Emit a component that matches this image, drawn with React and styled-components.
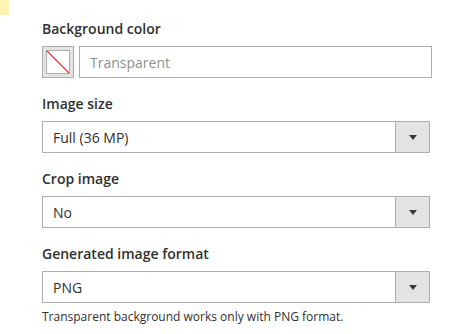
import React from "react";
import styled, { createGlobalStyle } from "styled-components";

const GlobalStyle = createGlobalStyle`
    body {
        margin: 0;
        background: #fff;
        font-family: "Open Sans", "Liberation Sans", sans-serif;
        color: #303030;
    }
`;

export default function App() {
    return (
        <Page>
            <GlobalStyle />
            <Marker />
            <Form>
                <Field>
                    <Label>Background color</Label>
                    <ColorRow>
                        <Swatch>
                            <SwatchInner>
                                <svg width="24" height="24" viewBox="0 0 24 24">
                                    <line x1="0" y1="0" x2="24" y2="24" stroke="#d0202a" strokeWidth="1.2" />
                                </svg>
                            </SwatchInner>
                        </Swatch>
                        <TextInput placeholder="Transparent" />
                    </ColorRow>
                </Field>
                <Field>
                    <Label>Image size</Label>
                    <Select value="Full (36 MP)" />
                </Field>
                <Field>
                    <Label>Crop image</Label>
                    <Select value="No" />
                </Field>
                <Field>
                    <Label>Generated image format</Label>
                    <Select value="PNG" />
                    <Note>Transparent background works only with PNG format.</Note>
                </Field>
            </Form>
        </Page>
    );
}

function Select({ value }) {
    return (
        <SelectBox>
            <SelectValue>{value}</SelectValue>
            <ArrowBtn>
                <Arrow />
            </ArrowBtn>
        </SelectBox>
    );
}

const Page = styled.div`
    position: relative;
    width: 467px;
    height: 334px;
    overflow: hidden;
`;

const Marker = styled.div`
    position: absolute;
    left: 0;
    top: 0;
    width: 9px;
    height: 15px;
    background: #fdf4b4;
`;

const Form = styled.div`
    display: flex;
    flex-direction: column;
    gap: 16px;
    padding: 19px 0 0 42px;
`;

const Field = styled.div`
    display: flex;
    flex-direction: column;
`;

const Label = styled.div`
    font-size: 14px;
    font-weight: 600;
    line-height: 20px;
    color: #303030;
    margin-bottom: 7px;
`;

const ColorRow = styled.div`
    display: flex;
    gap: 5px;
`;

const Swatch = styled.div`
    box-sizing: border-box;
    width: 32px;
    height: 32px;
    border: 1px solid #adadad;
    background: #e3e3e3;
    display: flex;
    align-items: center;
    justify-content: center;
`;

const SwatchInner = styled.div`
    box-sizing: border-box;
    width: 24px;
    height: 24px;
    border: 1px solid #adadad;
    background: #fff;
    overflow: hidden;
    display: flex;

    svg {
        margin: -1px;
    }
`;

const TextInput = styled.input`
    box-sizing: border-box;
    width: 353px;
    height: 32px;
    border: 1px solid #adadad;
    border-radius: 0;
    padding: 0 10px;
    font-family: "Open Sans", "Liberation Sans", sans-serif;
    font-size: 14px;
    color: #303030;
    outline: none;

    &::placeholder {
        color: #8f8f8f;
    }
`;

const SelectBox = styled.div`
    box-sizing: border-box;
    width: 388px;
    height: 32px;
    border: 1px solid #adadad;
    display: flex;
    align-items: stretch;
    background: #fff;
`;

const SelectValue = styled.div`
    flex: 1;
    display: flex;
    align-items: center;
    padding-left: 10px;
    font-size: 14px;
    color: #303030;
`;

const ArrowBtn = styled.div`
    width: 33px;
    border-left: 1px solid #adadad;
    background: #e3e3e3;
    display: flex;
    align-items: center;
    justify-content: center;
`;

const Arrow = styled.span`
    width: 0;
    height: 0;
    border-left: 4px solid transparent;
    border-right: 4px solid transparent;
    border-top: 5px solid #41362f;
    margin-top: 1px;
`;

const Note = styled.div`
    margin-top: 6px;
    font-size: 12px;
    line-height: 16.8px;
    color: #303030;
`;
